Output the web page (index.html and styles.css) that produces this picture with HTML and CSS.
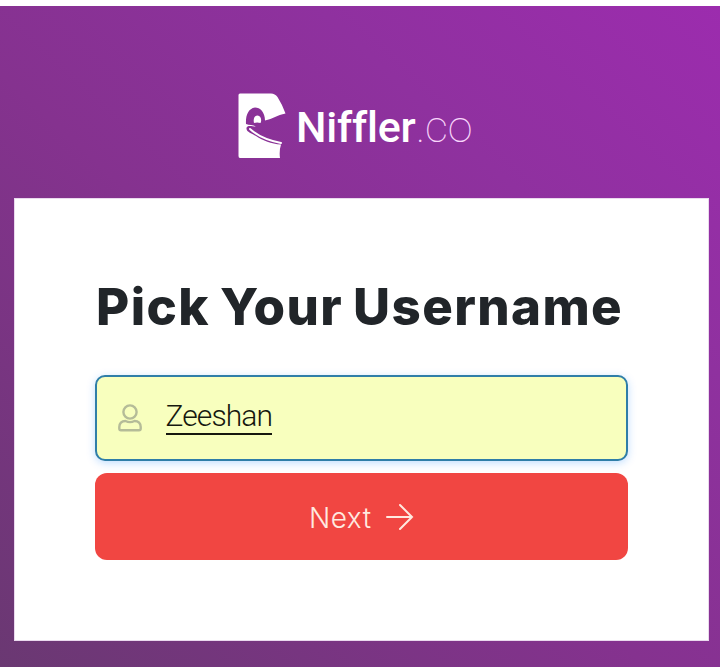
FILE: index.html
```html
<!DOCTYPE html>
<html lang="en">
  <head>
    <meta charset="UTF-8" />
    <title>Niffler.co - Pick Your Username</title>
    <link rel="stylesheet" href="styles.css">
  </head>
  <body>
    <main>
      <header>
        <svg class="logo" viewBox="0 0 48 66" aria-hidden="true">
          <path fill="#fff" d="M2 .5H33Q37 .5 39.500 4Q44 11 47.500 20.500C39 22 35 26 27 27.500C27 19 22 14.500 17 14.500C10 15.500 7.500 23 8 31C11 32.500 15 31.500 18 33.500C13 33 9 32 8.500 35C8 39 14 40.500 18 43C25 47.500 33 51 43 51.500Q41 58 42 65H2Q.5 65 .5 63V2Q.5 .5 2 .5Z"/>
          <path fill="#fff" d="M16 30C15 26 16.500 22.500 19.500 22.500C23 23 24 27 22.500 30Q19 29 16 30Z"/>
          <path fill="none" stroke="#fff" stroke-width="2" stroke-linecap="round" d="M12 36C19 42.500 30 47.500 43 50"/>
        </svg>
        <div class="brand">Niffler<span>.co</span></div>
      </header>

      <!-- Username form -->
      <form class="card">
        <h1>Pick Your Username</h1>
        <label class="field">
          <svg class="user-icon" viewBox="0 0 24 28" aria-hidden="true">
            <circle cx="12" cy="8" r="6.600"/>
            <path d="M7.500 17C3.500 17 1.300 19.500 1.300 23V24.500Q1.300 26.300 3 26.300H21Q22.700 26.300 22.700 24.500V23C22.700 19.500 20.500 17 16.500 17Q12 19.200 7.500 17Z"/>
          </svg>
          <span class="username">Zeeshan</span>
        </label>
        <button type="button" class="next">
          <span>Next</span>
          <svg class="arrow" viewBox="0 0 28 28" aria-hidden="true">
            <path d="M1 14H26M14 2L26 14L14 26"/>
          </svg>
        </button>
      </form>
    </main>
  </body>
</html>
```

FILE: styles.css
```css
body {
  margin: 0;
  background-color: #fff;
  font-family: Inter, sans-serif;
}

main {
  box-sizing: border-box;
  height: 661px;
  margin-top: 6px;
  padding: 0 11px 0 14px;
  background: linear-gradient(to top right, #6a3872 0%, #85328f 45%, #8f319f 72%, #9c2cae 100%);
  overflow: hidden;
}

/* Logo */
header {
  height: 192px;
  display: flex;
  align-items: flex-start;
}

.logo {
  width: 48px;
  height: 66px;
  margin: 87px 0 0 224px;
}

.brand {
  margin: 95px 0 0 10px;
  color: #fff;
  font-family: Roboto, sans-serif;
  font-size: 43px;
  font-weight: 500;
  line-height: 52px;
  letter-spacing: -0.2px;
  white-space: nowrap;
  font-variant-ligatures: none;
}

.brand span {
  color: #f8d5fb;
  font-size: 45px;
  font-weight: 100;
}

/* Card */
.card {
  box-sizing: border-box;
  height: 443px;
  padding: 76px 80px 0 79.5px;
  border: 1px solid #ead9ee;
  background-color: #fff;
}

h1 {
  margin: 0 0 36px 1.5px;
  color: #212529;
  font-size: 51px;
  font-weight: 800;
  line-height: 64px;
  letter-spacing: 1.4px;
  word-spacing: -2.5px;
  white-space: nowrap;
}

.field {
  box-sizing: border-box;
  height: 86px;
  display: flex;
  align-items: center;
  padding: 0 21px;
  border: 2px solid #2f7ea8;
  border-radius: 10px;
  background-color: #f8ffbe;
  box-shadow: 0 2px 8px rgba(0, 123, 255, 0.25);
}

.user-icon {
  width: 24px;
  height: 28px;
  fill: none;
  stroke: #b5bc98;
  stroke-width: 2.4;
}

.username {
  margin: 0 0 2px 24px;
  border-bottom: 2px solid #16180f;
  color: #16180f;
  font-family: Roboto, sans-serif;
  font-size: 30px;
  font-weight: 300;
  line-height: 34px;
  letter-spacing: -0.9px;
}

.next {
  width: 100%;
  height: 87px;
  display: flex;
  align-items: center;
  justify-content: center;
  gap: 14px;
  margin-top: 12px;
  padding: 0;
  border: none;
  border-radius: 12px;
  background-color: #f14642;
  color: #ffeae0;
  font-family: Inter, sans-serif;
  font-size: 28px;
  font-weight: 300;
  letter-spacing: 0.5px;
}

.next span {
  padding-top: 2px;
}

.arrow {
  width: 28px;
  height: 28px;
  fill: none;
  stroke: #ffeae0;
  stroke-width: 2;
  stroke-linecap: round;
}
```
